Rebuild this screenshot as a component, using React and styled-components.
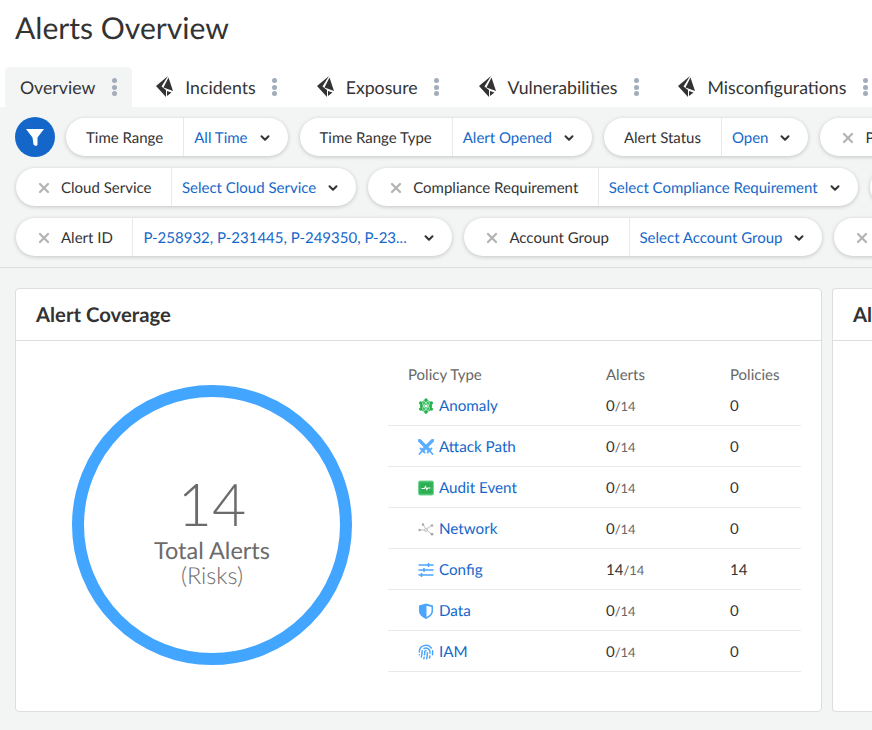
import React from 'react';
import styled, { createGlobalStyle } from 'styled-components';
import { ChevronDown, X, Fingerprint } from 'lucide-react';

const GlobalStyle = createGlobalStyle`
  html, body {
    margin: 0;
    background: #f3f5f5;
    font-family: Lato, "Open Sans", sans-serif;
    color: #333;
    overflow: hidden;
    text-rendering: geometricPrecision;
  }
`;

const Page = styled.div`
  width: 872px;
  height: 730px;
  overflow: hidden;
  display: flex;
  flex-direction: column;
`;

const Top = styled.header`
  background: #fff;
  padding-top: 9px;
`;

const Title = styled.h1`
  margin: 0 0 0 15px;
  font-size: 30.1px;
  line-height: 38px;
  font-weight: 400;
  color: #333;
`;

const Tabs = styled.nav`
  display: flex;
  gap: 8px;
  margin: 20px 0 0 5px;
  height: 40px;
  white-space: nowrap;
`;

const Tab = styled.div`
  display: flex;
  flex: none;
  align-items: center;
  padding: 0 15px;
  border-radius: 5px 5px 0 0;
  background: ${(p) => (p.$active ? '#f3f5f5' : '#fff')};
  font-size: 17.7px;
  color: #333;
`;

const TabLabel = styled.span`
  margin-right: 16px;
`;

const TabLogo = styled.svg`
  width: 18px;
  height: 24px;
  margin-right: 12px;
  flex: none;
`;

const Dots = styled.span`
  display: flex;
  flex-direction: column;
  align-items: center;
  gap: 1.5px;
  flex: none;
  width: 6px;
  & i {
    width: 5px;
    height: 5px;
    border-radius: 50%;
    background: #a3adb9;
  }
`;

const FilterBar = styled.section`
  display: flex;
  flex-direction: column;
  gap: 12px;
  padding: 11px 0 11px 16px;
  border-bottom: 1px solid #dcdedf;
`;

const FilterRow = styled.div`
  display: flex;
  align-items: center;
  gap: 12px;
  height: 38px;
  white-space: nowrap;
`;

const FilterButton = styled.button`
  flex: none;
  width: 40px;
  height: 40px;
  margin: 0 -1px;
  padding: 0;
  border: 0;
  border-radius: 50%;
  background: #1467c9;
  display: flex;
  align-items: center;
  justify-content: center;
`;

const Pill = styled.div`
  flex: none;
  display: flex;
  height: 38px;
  background: #fff;
  border-radius: 19px;
  box-shadow: 0 1px 4px rgba(0, 0, 0, 0.2);
  font-size: 15px;
`;

const PillLabel = styled.div`
  display: flex;
  align-items: center;
  padding: 2px ${(p) => (p.$removable ? '19.5px' : '20px')} 0 20px;
  color: #333;
  border-right: 1px solid #e7e9ea;
  & svg {
    margin-right: 9px;
    color: #b4b4b4;
  }
`;

const PillValue = styled.div`
  display: flex;
  align-items: center;
  padding: 2px 16px 0 10px;
  color: #1467c9;
  & svg {
    margin-left: 10px;
    color: #333;
  }
`;

const ValueText = styled.span`
  min-width: ${(p) => p.$min || 0}px;
`;

const Content = styled.main`
  flex: 1;
  display: flex;
  gap: 10px;
  padding: 20px 0 18px 15px;
  min-height: 0;
`;

const Card = styled.article`
  flex: ${(p) => (p.$grow ? '1 0 auto' : 'none')};
  width: ${(p) => (p.$grow ? 'auto' : '807px')};
  background: #fff;
  border: 1px solid #dcdedf;
  border-right-width: ${(p) => (p.$grow ? 0 : '1px')};
  border-radius: 4px;
  box-sizing: border-box;
  display: flex;
  flex-direction: column;
`;

const CardHead = styled.h2`
  margin: 0;
  height: 51px;
  padding-left: 20px;
  line-height: 53px;
  font-size: 20.3px;
  font-weight: 700;
  color: #333;
  border-bottom: 1px solid #dcdedf;
  white-space: nowrap;
`;

const CardBody = styled.div`
  flex: 1;
  display: flex;
  padding: 0 20px 0 56px;
`;

const Ring = styled.div`
  flex: none;
  width: 280px;
  height: 280px;
  margin-top: 44px;
  margin-right: 36px;
  box-sizing: border-box;
  border: 12px solid #42a5ff;
  border-radius: 50%;
  display: flex;
  flex-direction: column;
  align-items: center;
  justify-content: center;
  color: #6b6b6b;
`;

const RingValue = styled.div`
  font-size: 59px;
  line-height: 60px;
  font-weight: 300;
  margin-top: 11px;
`;

const RingLabel = styled.div`
  margin-top: 4px;
  font-size: 23.5px;
  line-height: 26px;
`;

const RingSub = styled.div`
  font-size: 23.5px;
  line-height: 24px;
  font-weight: 300;
`;

const Table = styled.div`
  flex: 1;
  padding-top: 21px;
`;

const Row = styled.div`
  display: grid;
  grid-template-columns: 218px 124px 1fr;
  align-items: center;
  box-sizing: border-box;
  height: ${(p) => (p.$head ? '23px' : '41px')};
  padding-top: 2px;
  border-bottom: ${(p) => (p.$head ? '0' : '1px solid #e8e9ea')};
  font-size: 15px;
  color: ${(p) => (p.$head ? '#666' : '#333')};
`;

const HeadCell = styled.div`
  padding-left: ${(p) => (p.$first ? '20px' : '0')};
`;

const TypeCell = styled.div`
  display: flex;
  align-items: center;
  padding-left: 30px;
  font-size: 15.2px;
  color: #1467c9;
  & svg {
    flex: none;
    width: 16px;
    height: 16px;
    margin-right: 5px;
  }
`;

const Total = styled.span`
  font-size: 13px;
  color: #666;
`;

function TabMark() {
  return (
    <TabLogo viewBox="0 0 18 24">
      <path fill="#333" d="M13 1 L1 11 L11 22 V15 L6.5 11.5 Z" />
      <path fill="#333" d="M13.5 2.5 L18 16 L8.5 12.5 Z" />
      <path fill="#333" d="M12 16 L16.5 17.5 L12 21 Z" />
    </TabLogo>
  );
}

function Anomaly() {
  return (
    <svg viewBox="0 0 16 16">
      <circle cx="8" cy="8" r="6" fill="#22b14c" />
      <g fill="#22b14c">
        <circle cx="8" cy="1.8" r="1.6" />
        <circle cx="8" cy="14.2" r="1.6" />
        <circle cx="2.6" cy="4.9" r="1.6" />
        <circle cx="13.4" cy="4.9" r="1.6" />
        <circle cx="2.6" cy="11.1" r="1.6" />
        <circle cx="13.4" cy="11.1" r="1.6" />
      </g>
      <g fill="none" stroke="#c8f0d4" strokeWidth="0.8">
        <ellipse cx="8" cy="8" rx="5" ry="2.2" transform="rotate(60 8 8)" />
        <ellipse cx="8" cy="8" rx="5" ry="2.2" transform="rotate(-60 8 8)" />
      </g>
      <circle cx="8" cy="8" r="1.5" fill="#fff" />
    </svg>
  );
}

function AttackPath() {
  return (
    <svg viewBox="0 0 16 16">
      <g stroke="#5aadff" fill="none" strokeLinecap="round">
        <path strokeWidth="3.2" d="M1.5 1.5 L10.5 10.5" />
        <path strokeWidth="3.2" d="M14.5 1.5 L5.5 10.5" />
        <path strokeWidth="1.8" d="M2.5 9.5 L6.5 13.5 M13.5 9.5 L9.5 13.5 M1.5 15 L4 12 M14.5 15 L12 12" />
      </g>
    </svg>
  );
}

function AuditEvent() {
  return (
    <svg viewBox="0 0 16 16">
      <rect x="0.5" y="1" width="15" height="14" rx="1.5" fill="#35b95c" stroke="#75d495" />
      <rect x="2.5" y="3" width="11" height="10" fill="#2dae54" />
      <path d="M3.5 8.5 H6.5 L7.5 6.5 L8.8 9.5 L9.8 8 H12.5" fill="none" stroke="#fff" strokeWidth="1.1" />
    </svg>
  );
}

function Network() {
  return (
    <svg viewBox="0 0 16 16">
      <g stroke="#b6b6b6" strokeWidth="0.9" fill="none">
        <path d="M2 9 H7 M8 8 L5 3.5 M8.5 8 L13.5 4.5 M8.5 9 L13.5 13" />
        <circle cx="8" cy="9" r="1.4" fill="#fff" />
      </g>
      <g fill="#a8a8a8">
        <circle cx="1.6" cy="9" r="1.2" />
        <circle cx="5" cy="3.5" r="1.2" />
        <circle cx="14" cy="4.5" r="1.2" />
        <circle cx="14" cy="13.2" r="1.4" />
      </g>
    </svg>
  );
}

function Config() {
  return (
    <svg viewBox="0 0 16 16">
      <g stroke="#4aa5ff" fill="none">
        <path strokeWidth="1.6" d="M0.5 3 H15.5 M0.5 8 H15.5 M0.5 13 H15.5" />
        <path strokeWidth="1.5" d="M10.5 1 V5 M6 6 V10 M3.5 11 V15" />
      </g>
    </svg>
  );
}

function DataShield() {
  return (
    <svg viewBox="0 0 16 16">
      <path d="M8 0.5 L15 2.5 V8 C15 11.5 12 14.2 8 16 C4 14.2 1 11.5 1 8 V2.5 Z" fill="#4aa5ff" />
      <path d="M8.5 2.8 L13.5 4 V8 C13.5 10.5 11.4 12.6 8.5 14 Z" fill="#fff" />
    </svg>
  );
}

const policies = [
  { name: 'Anomaly', Icon: Anomaly, alerts: 0, count: 0 },
  { name: 'Attack Path', Icon: AttackPath, alerts: 0, count: 0 },
  { name: 'Audit Event', Icon: AuditEvent, alerts: 0, count: 0 },
  { name: 'Network', Icon: Network, alerts: 0, count: 0 },
  { name: 'Config', Icon: Config, alerts: 14, count: 14 },
  { name: 'Data', Icon: DataShield, alerts: 0, count: 0 },
  { name: 'IAM', Icon: () => <Fingerprint color="#4aa5ff" strokeWidth={2.2} />, alerts: 0, count: 0 },
];

const tabs = ['Overview', 'Incidents', 'Exposure', 'Vulnerabilities', 'Misconfigurations'];

const filterRows = [
  [
    { label: 'Time Range', value: 'All Time' },
    { label: 'Time Range Type', value: 'Alert Opened' },
    { label: 'Alert Status', value: 'Open' },
    { label: 'Policy Type', value: 'Select Policy Type', removable: true },
  ],
  [
    { label: 'Cloud Service', value: 'Select Cloud Service', removable: true },
    { label: 'Compliance Requirement', value: 'Select Compliance Requirement', removable: true },
    { label: 'Cloud Type', value: 'Select Cloud Type', removable: true },
  ],
  [
    { label: 'Alert ID', value: 'P-258932, P-231445, P-249350, P-23...', removable: true, minWidth: 269 },
    { label: 'Account Group', value: 'Select Account Group', removable: true },
    { label: 'Region', value: 'Select Region', removable: true },
  ],
];

function Filter({ label, value, removable, minWidth }) {
  return (
    <Pill>
      <PillLabel $removable={removable}>
        {removable && <X size={16} strokeWidth={3.4} />}
        {label}
      </PillLabel>
      <PillValue>
        <ValueText $min={minWidth}>{value}</ValueText>
        <ChevronDown size={14} strokeWidth={3.4} />
      </PillValue>
    </Pill>
  );
}

export default function App() {
  return (
    <Page>
      <GlobalStyle />
      <Top>
        <Title>Alerts Overview</Title>
        <Tabs>
          {tabs.map((name, i) => (
            <Tab key={name} $active={i === 0}>
              {i > 0 && <TabMark />}
              <TabLabel>{name}</TabLabel>
              <Dots><i /><i /><i /></Dots>
            </Tab>
          ))}
        </Tabs>
      </Top>
      <FilterBar>
        {filterRows.map((row, i) => (
          <FilterRow key={row[0].label}>
            {i === 0 && (
              <FilterButton aria-label="Filters">
                <svg width="22" height="22" viewBox="0 0 22 22">
                  <path fill="#fff" d="M2 3 H20 L13.5 11.5 V18.5 C13.5 20 11 20.5 9.5 18.5 L8.5 11.5 Z" />
                </svg>
              </FilterButton>
            )}
            {row.map((f) => (
              <Filter key={f.label} {...f} />
            ))}
          </FilterRow>
        ))}
      </FilterBar>
      <Content>
        <Card>
          <CardHead>Alert Coverage</CardHead>
          <CardBody>
            <Ring>
              <RingValue>14</RingValue>
              <RingLabel>Total Alerts</RingLabel>
              <RingSub>(Risks)</RingSub>
            </Ring>
            <Table>
              <Row $head>
                <HeadCell $first>Policy Type</HeadCell>
                <HeadCell>Alerts</HeadCell>
                <HeadCell>Policies</HeadCell>
              </Row>
              {policies.map(({ name, Icon, alerts, count }) => (
                <Row key={name}>
                  <TypeCell><Icon />{name}</TypeCell>
                  <div>{alerts}<Total>/14</Total></div>
                  <div>{count}</div>
                </Row>
              ))}
            </Table>
          </CardBody>
        </Card>
        <Card $grow>
          <CardHead>Alert Trend</CardHead>
        </Card>
      </Content>
    </Page>
  );
}
